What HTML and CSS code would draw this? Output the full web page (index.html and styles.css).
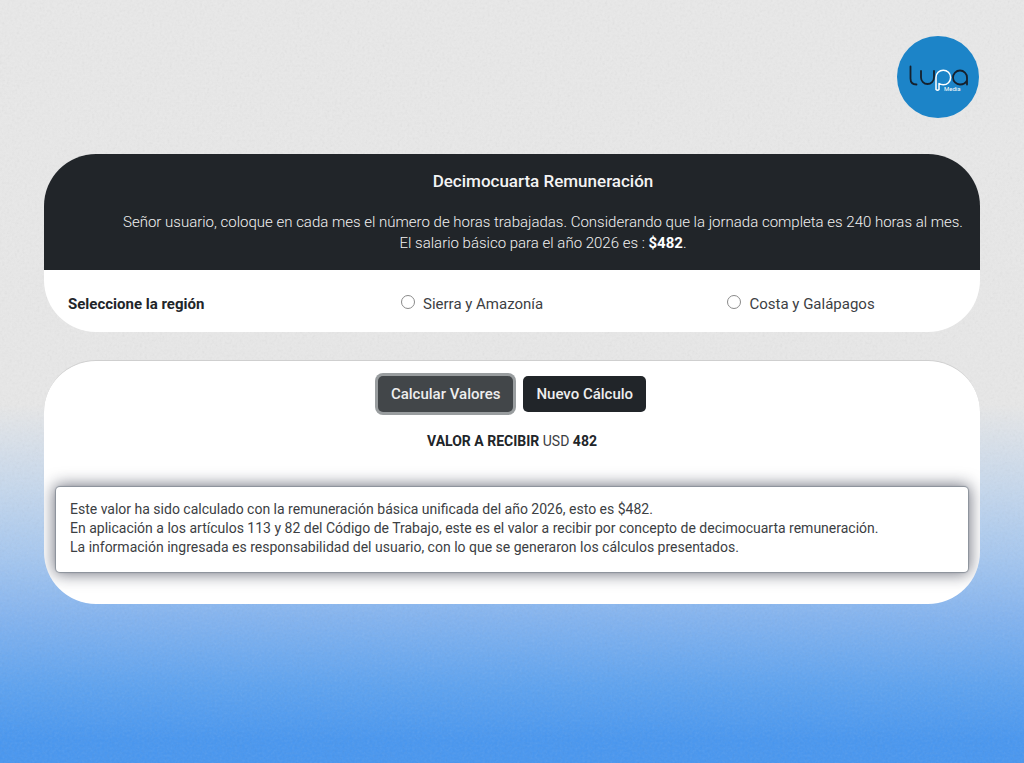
FILE: index.html
```html
<!DOCTYPE html>
<html lang="es">
<head>
    <meta charset="UTF-8">
    <meta name="viewport" content="width=device-width, initial-scale=1.0">
    <title>Decimocuarta Remuneración</title>
    <link rel="stylesheet" href="styles.css">
</head>
<body>
    <!-- paper grain over the background gradient -->
    <svg class="grain" aria-hidden="true">
        <filter id="grain">
            <feTurbulence type="fractalNoise" baseFrequency="0.4" numOctaves="2" stitchTiles="stitch"/>
            <feColorMatrix type="saturate" values="0"/>
        </filter>
        <rect width="100%" height="100%" filter="url(#grain)"/>
    </svg>

    <header class="top">
        <svg class="logo" viewBox="0 0 82 82" role="img" aria-label="lupa Media">
            <circle cx="41" cy="41" r="41" fill="#1c84c8"/>
            <g fill="none" stroke="#16202c" stroke-width="1.8" stroke-linecap="round">
                <path d="M13.5 30.5v12q0 6 6 6"/>
                <path d="M24 35v6.500a6.500 6.500 0 0 0 13 0V35"/>
                <path d="M70 48.500v-7a7 7 0 1 0-7 7q5 0 7-4"/>
            </g>
            <path d="M39 53.500V41.500a7.300 7.300 0 1 1 7.300 7.300q-2.600 0-4.300-1.300v6q-1.500 1.500-3 0z" fill="none" stroke="#fff" stroke-width="1.500" stroke-linejoin="round"/>
            <text x="47" y="55" class="logo-sub">Media</text>
        </svg>
    </header>

    <main class="container">
        <form id="calcForm"></form>
        <section class="card">
            <div class="card-header">
                <h1>Decimocuarta Remuneración</h1>
                <p>Señor usuario, coloque en cada mes el número de horas trabajadas. Considerando que la jornada completa es 240 horas al mes.<br>
                El salario básico para el año 2026 es : <strong>$482</strong>.</p>
            </div>
            <div class="region" role="radiogroup" aria-labelledby="regionLabel">
                <span class="region-title" id="regionLabel">Seleccione la región</span>
                <div class="option">
                    <input type="radio" id="sierra" name="region" value="sierra" form="calcForm">
                    <label for="sierra">Sierra y Amazonía</label>
                </div>
                <div class="option">
                    <input type="radio" id="costa" name="region" value="costa" form="calcForm">
                    <label for="costa">Costa y Galápagos</label>
                </div>
            </div>
        </section>

        <section class="card card-result">
            <div class="buttons">
                <button type="button" class="btn btn-active">Calcular Valores</button>
                <button type="reset" class="btn" form="calcForm">Nuevo Cálculo</button>
            </div>
            <p class="total"><strong>VALOR A RECIBIR</strong> USD <strong>482</strong></p>
            <div class="note">
                Este valor ha sido calculado con la remuneración básica unificada del año 2026, esto es $482.<br>
                En aplicación a los artículos 113 y 82 del Código de Trabajo, este es el valor a recibir por concepto de decimocuarta remuneración.<br>
                La información ingresada es responsabilidad del usuario, con lo que se generaron los cálculos presentados.
            </div>
        </section>
    </main>
</body>
</html>
```
FILE: styles.css
```css
* {
    box-sizing: border-box;
}

body {
    position: relative;
    min-height: 100vh;
    margin: 0;
    font-family: Roboto, "Liberation Sans", sans-serif;
    font-size: 15px;
    line-height: 20px;
    color: #3c4043;
    background: linear-gradient(#e9e9e9 0%, #e8e8e8 53%, #c6d8ed 64%, #a5c7f0 73%, #82b3f0 81%, #5ca2f0 90%, #4796f0 97%);
}

.grain {
    position: absolute;
    inset: 0;
    z-index: -1;
    width: 100%;
    height: 100%;
    opacity: 0.12;
}

.top {
    display: flex;
    justify-content: flex-end;
    padding: 36px 45px;
}

.logo {
    display: block;
    width: 82px;
    height: 82px;
}

.logo-sub {
    font-size: 6px;
    fill: #fff;
}

.container {
    padding: 0 44px 40px;
}

.card {
    margin-bottom: 28px;
    background-color: #fff;
    border-radius: 52px;
    overflow: hidden;
}

.card-header {
    padding: 17px 8px 16px 70px;
    text-align: center;
    color: #f2f2f2;
    background-color: #212529;
}

.card-header h1 {
    margin: 0 0 20px;
    font-size: 17px;
    font-weight: 500;
    line-height: 21px;
    color: #f4f4f4;
}

.card-header p {
    margin: 0;
    font-weight: 300;
    line-height: 21px;
}

.card-header strong {
    font-weight: 700;
    color: #fff;
}

.region {
    display: grid;
    grid-template-columns: 51fr 50fr 35fr;
    align-items: center;
    padding: 24px 24px 18px;
}

.region-title {
    font-weight: 700;
    color: #212529;
}

.option {
    display: flex;
    gap: 8px;
}

.option input {
    appearance: none;
    width: 14px;
    height: 14px;
    margin: 1px 0 0;
    border: 1px solid #8a8a8a;
    border-radius: 50%;
    background-color: #fff;
}

.option input:checked {
    border: 4px solid #212529;
}

.card-result {
    margin-bottom: 0;
    padding: 15px 12px 32px;
    border-top: 1px solid #cfcfcf;
}

.buttons {
    display: flex;
    justify-content: center;
    gap: 10px;
}

.btn {
    padding: 8px 13px;
    font-family: inherit;
    font-size: 15px;
    font-weight: 500;
    line-height: 20px;
    color: #eee;
    background-color: #212529;
    border: none;
    border-radius: 5px;
    cursor: pointer;
}

.btn:hover,
.btn-active {
    background-color: #424649;
}

.btn-active {
    box-shadow: 0 0 0 3px #999d9f;
}

.total {
    margin: 19px 0 36px;
    font-size: 14px;
    text-align: center;
}

.total strong {
    font-weight: 700;
    color: #212529;
}

.note {
    padding: 13px 14px 15px;
    font-size: 14px;
    line-height: 19px;
    background-color: #fff;
    border-radius: 4px;
    box-shadow: 0 0 1px 1px #8b929b, 0 0 16px 2px rgba(20, 25, 45, 0.6);
}
```
